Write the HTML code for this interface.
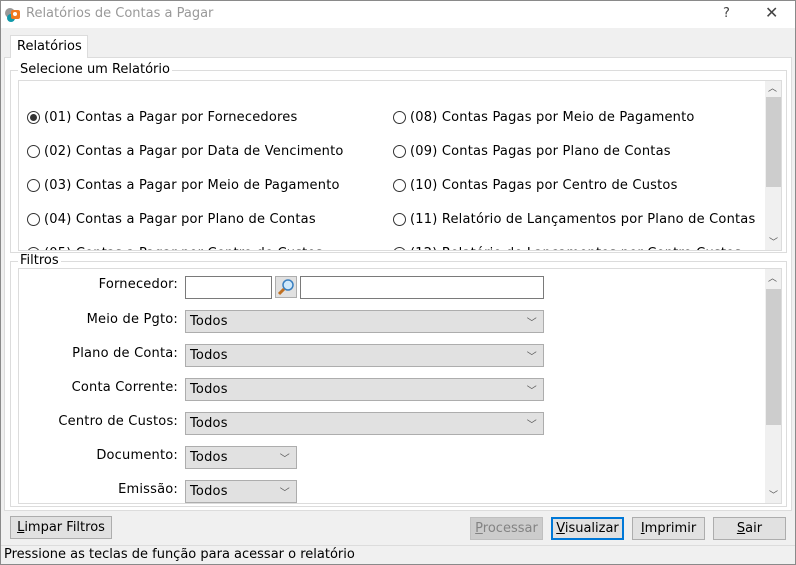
<!DOCTYPE html>
<html><head><meta charset="utf-8"><style>
*{box-sizing:border-box;margin:0;padding:0}
body{width:796px;height:565px;position:relative;background:#f0f0f0;font-family:"DejaVu Sans","Liberation Sans",sans-serif;font-size:13px;color:#000;overflow:hidden}
.a{position:absolute}
.frame{left:0;top:0;width:796px;height:565px;border:1px solid #8a8a8a;background:#f0f0f0}
.title{left:1px;top:1px;width:794px;height:27px;background:#fff}
.title span{position:absolute;left:25px;top:5px;color:#999;font-size:13px}
.box{background:#fff;border:1px solid #dcdcdc}
.grp{border:1px solid #dcdcdc}
.lg{background:#fff;padding:0 2px;font-size:13px}
.r{display:flex;align-items:center;white-space:nowrap;font-size:13px;letter-spacing:0.2px}
.rb{width:13px;height:13px;border:1px solid #333;border-radius:50%;background:#fff;margin-right:4px;position:relative;flex:none}
.rb.on::after{content:"";position:absolute;left:2px;top:2px;width:7px;height:7px;border-radius:50%;background:#333}
.sb{background:#f0f0f0}
.thumb{background:#cdcdcd}
.lbl{text-align:right;width:170px;left:8px;font-size:13px;letter-spacing:0.2px}
.sel{background:#e1e1e1;border:1px solid #adadad;height:23px;padding:3px 0 0 4px;font-size:13px;letter-spacing:0.2px}
.sel i{position:absolute;right:6px;top:3px;font-style:normal;font-size:10px;color:#555}
.inp{background:#fff;border:1px solid #7a7a7a;height:23px}
.btn{background:#e1e1e1;border:1px solid #adadad;height:23px;text-align:center;padding-top:3px;font-size:13px}
u{text-decoration:underline}
</style></head><body>
<div class="a frame"></div>
<div class="a title"><svg class="a" style="left:3px;top:5px" width="17" height="17"><circle cx="6" cy="7" r="5" fill="#999"/><circle cx="7" cy="12" r="4" fill="#19a"/><rect x="7" y="4" width="9" height="9" rx="2" fill="#f07a20"/><circle cx="11" cy="8" r="2" fill="#fff"/></svg><span>Relatórios de Contas a Pagar</span>
<div class="a" style="left:722px;top:5px;color:#444">?</div>
<div class="a" style="left:764px;top:2px;color:#444;font-size:16px">✕</div></div>
<div class="a" style="left:4px;top:57px;width:788px;height:454px;background:#fff;border:1px solid #dcdcdc"></div>
<div class="a" style="left:10px;top:35px;width:78px;height:23px;background:#fff;border:1px solid #dcdcdc;border-bottom:none;padding:3px 0 0 6px">Relatórios</div>
<div class="a grp" style="left:10px;top:70px;width:777px;height:183px"></div>
<div class="a lg" style="left:18px;top:62px">Selecione um Relatório</div>
<div class="a box" style="left:18px;top:80px;width:764px;height:171px;overflow:hidden">
 <div class="a r" style="left:8px;top:29px"><span class="rb on"></span>(01) Contas a Pagar por Fornecedores</div>
 <div class="a r" style="left:8px;top:63px"><span class="rb"></span>(02) Contas a Pagar por Data de Vencimento</div>
 <div class="a r" style="left:8px;top:97px"><span class="rb"></span>(03) Contas a Pagar por Meio de Pagamento</div>
 <div class="a r" style="left:8px;top:131px"><span class="rb"></span>(04) Contas a Pagar por Plano de Contas</div>
 <div class="a r" style="left:8px;top:165px"><span class="rb"></span>(05) Contas a Pagar por Centro de Custos</div>
 <div class="a r" style="left:374px;top:29px"><span class="rb"></span>(08) Contas Pagas por Meio de Pagamento</div>
 <div class="a r" style="left:374px;top:63px"><span class="rb"></span>(09) Contas Pagas por Plano de Contas</div>
 <div class="a r" style="left:374px;top:97px"><span class="rb"></span>(10) Contas Pagas por Centro de Custos</div>
 <div class="a r" style="left:374px;top:131px"><span class="rb"></span>(11) Relatório de Lançamentos por Plano de Contas</div>
 <div class="a r" style="left:374px;top:165px"><span class="rb"></span>(12) Relatório de Lançamentos por Centro Custos</div>
 <div class="a sb" style="left:746px;top:0;width:17px;height:169px"></div>
 <div class="a thumb" style="left:747px;top:16px;width:15px;height:90px"></div>
 <div class="a" style="left:749px;top:0;font-size:9px;color:#555">︿</div>
 <div class="a" style="left:750px;top:154px;font-size:9px;color:#555">﹀</div>
</div>
<div class="a grp" style="left:10px;top:261px;width:777px;height:246px"></div>
<div class="a lg" style="left:18px;top:253px">Filtros</div>
<div class="a box" style="left:18px;top:268px;width:764px;height:236px;overflow:hidden">
 <div class="a sb" style="left:746px;top:0;width:17px;height:234px"></div>
 <div class="a thumb" style="left:747px;top:20px;width:15px;height:136px"></div>
 <div class="a" style="left:749px;top:2px;font-size:9px;color:#555">︿</div>
 <div class="a" style="left:750px;top:219px;font-size:9px;color:#555">﹀</div>
</div>
<div class="a lbl" style="top:277px">Fornecedor:</div>
<div class="a inp" style="left:185px;top:276px;width:87px"></div>
<div class="a" style="left:275px;top:276px;width:22px;height:22px;background:#e1e1e1;border:1px solid #adadad"><svg width="20" height="20"><circle cx="12" cy="8" r="5" fill="#cfe8fa" stroke="#3a7fc0" stroke-width="1.5"/><line x1="8" y1="12" x2="3" y2="17" stroke="#c07020" stroke-width="3"/></svg></div>
<div class="a inp" style="left:300px;top:276px;width:244px"></div>
<div class="a lbl" style="top:312px">Meio de Pgto:</div>
<div class="a sel" style="left:185px;top:310px;width:359px">Todos<i>﹀</i></div>
<div class="a lbl" style="top:346px">Plano de Conta:</div>
<div class="a sel" style="left:185px;top:344px;width:359px">Todos<i>﹀</i></div>
<div class="a lbl" style="top:380px">Conta Corrente:</div>
<div class="a sel" style="left:185px;top:378px;width:359px">Todos<i>﹀</i></div>
<div class="a lbl" style="top:414px">Centro de Custos:</div>
<div class="a sel" style="left:185px;top:412px;width:359px">Todos<i>﹀</i></div>
<div class="a lbl" style="top:448px">Documento:</div>
<div class="a sel" style="left:185px;top:446px;width:112px">Todos<i>﹀</i></div>
<div class="a lbl" style="top:482px">Emissão:</div>
<div class="a sel" style="left:185px;top:480px;width:112px">Todos<i>﹀</i></div>
<div class="a btn" style="left:10px;top:516px;width:102px"><u>L</u>impar Filtros</div>
<div class="a btn" style="left:470px;top:517px;width:73px;background:#cccccc;border-color:#bfbfbf;color:#838383"><u>P</u>rocessar</div>
<div class="a btn" style="left:551px;top:517px;width:73px;border:2px solid #0078d7;padding-top:2px"><u>V</u>isualizar</div>
<div class="a btn" style="left:632px;top:517px;width:73px"><u>I</u>mprimir</div>
<div class="a btn" style="left:713px;top:517px;width:73px"><u>S</u>air</div>
<div class="a" style="left:1px;top:545px;width:794px;height:1px;background:#dcdcdc"></div>
<div class="a" style="left:4px;top:547px;font-size:13px">Pressione as teclas de função para acessar o relatório</div>
</body></html>
